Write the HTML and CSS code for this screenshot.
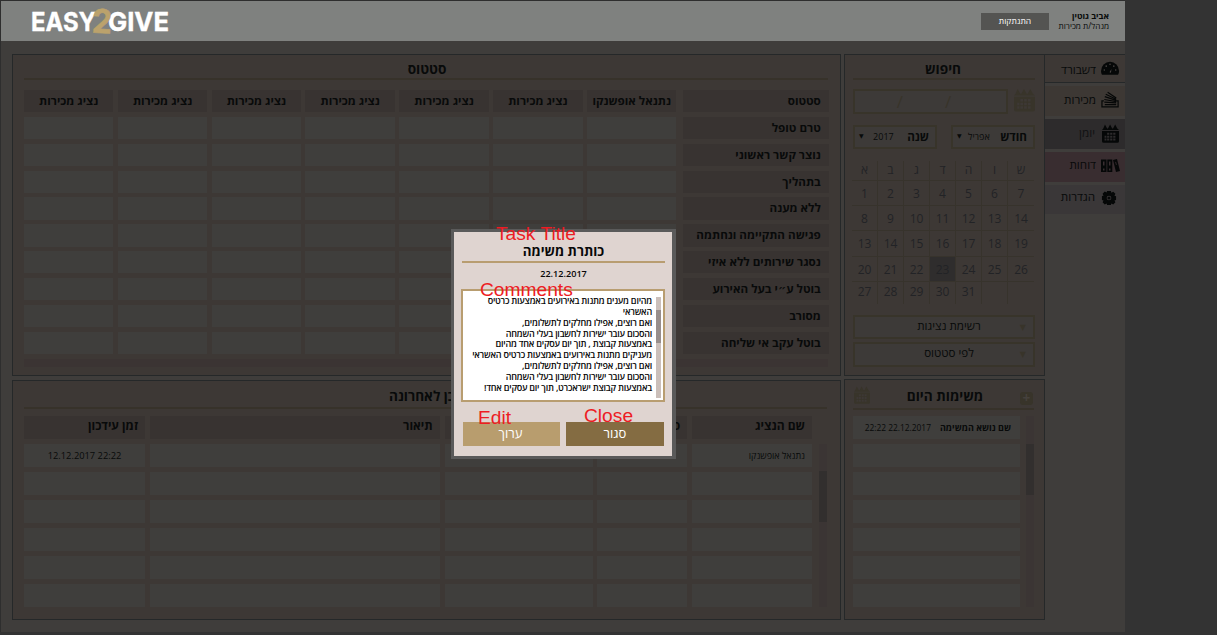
FILE: index.html
```html
<!DOCTYPE html>
<html lang="he"><head><meta charset="utf-8"><title>Easy2Give</title><link rel="stylesheet" href="styles.css"></head>
<body>
<svg class="defs" width="0" height="0"><defs>
<symbol id="cal" viewBox="0 0 20 22"><path fill="currentColor" fill-rule="evenodd" d="M0 6.800L1.500 5l2-4.500L6 5h1l2.500-4.500L12 5h1l2.500-4.500L18 5l2 1.800zM0 8h20v12q0 2-2 2H2q-2 0-2-2zM6 10v2.500h2.600V10zm3.600 0v2.500h2.600V10zm3.600 0v2.500h2.600V10zM3 13.500V16h2.200v-2.500zm3 0V16h2.600v-2.500zm3.600 0V16h2.600v-2.500zm3.600 0V16h2.600v-2.500zM3 17v2.300h2.200V17zm3 0v2.300h2.600V17zm3.600 0v2.300h2.600V17zm3.600 0v2.300h2.600V17z"/></symbol>
</defs></svg>
<div class="app" dir="rtl">
<header class="top">
 <div class="user"><b>אביב גוטין</b><span>מנהל/ת מכירות</span></div>
 <button class="logout">התנתקות</button>
 <svg class="logo" width="140" height="30" viewBox="0 0 140 30" direction="ltr"><g font-family="Inter" font-weight="700" font-size="26"><text x="-1" y="25" fill="#fff" stroke="#fff" stroke-width=".4" textLength="65" lengthAdjust="spacingAndGlyphs">EASY</text><text x="76" y="25" fill="#fff" stroke="#fff" stroke-width=".4" textLength="61" lengthAdjust="spacingAndGlyphs">GIVE</text><text x="60" y="27" font-size="33" textLength="20" lengthAdjust="spacingAndGlyphs" fill="#bba26c" stroke="#bba26c" stroke-width=".6" transform="rotate(3 70 18)">2</text></g></svg>
</header>
<main class="main">
 <nav class="nav">
  <a class="n0"><svg width="20" height="15" viewBox="0 0 20 15"><path d="M1 14Q0 12 0 10a9.500 9.500 0 0 1 19 0q0 2-1 4z"/><g fill="#4a4644"><circle cx="3.500" cy="9" r=".8"/><circle cx="5.500" cy="5" r=".8"/><circle cx="9.500" cy="3" r=".8"/><circle cx="13.500" cy="5" r=".8"/><circle cx="15.500" cy="9" r=".8"/><path d="M9 11.500l2-3.500-.5 4z"/></g></svg>דשבורד</a>
  <a class="n1"><svg class="stack" width="20" height="17" viewBox="0 0 20 17"><path d="M3 10H1v6.200h17V10h-2M4 13.800h12M3.500 11.300l12.500.7M3.500 8.500l12.500 2.300M4 5.500l12 4M5 3l11 5.200M7 .8l9 6.200"/></svg>מכירות</a>
  <a class="n2"><svg width="17" height="19"><use href="#cal"/></svg>יומן</a>
  <a class="n3"><svg width="19" height="14" viewBox="0 0 19 14"><path fill-rule="evenodd" d="M0 .5h5.500V13H0zM6.300.5h5V13h-5zM12 1l4-1 3 12-4 1zM2 2.500v4h1.500v-4zm6 0v4h1.500v-4zm-6 7v2h1.500v-2zm6 0v2h1.500v-2zM14.200 3l.8 3 .8-.2-.8-3z"/></svg>דוחות</a>
  <a class="n4"><svg width="16" height="16" viewBox="-8.500 -8.500 17 17"><path fill-rule="evenodd" d="M-2-7.500h4l.5 1.800 2-1 2.300 2.300-1 2 1.700.5v4l-1.700.5 1 2-2.300 2.300-2-1L2 7.500h-4l-.5-1.600-2 1-2.300-2.300 1-2L-7.500 2v-4l1.700-.5-1-2 2.300-2.300 2 1zM0-2.500a2.500 2.500 0 1 0 0 5 2.500 2.500 0 0 0 0-5"/><circle r="1.700"/></svg>הגדרות</a>
 </nav>
 <aside class="side">
  <section class="panel search">
   <h2>חיפוש</h2>
   <div class="date"><svg width="21" height="24"><use href="#cal"/></svg><div class="box datebox"><i>/</i><i>/</i></div></div>
   <div class="selects"><div class="box sel"><b>חודש</b><span>אפריל</span><em>▼</em></div><div class="box sel"><b>שנה</b><span>2017</span><em>▼</em></div></div>
   <div class="calendar" id="calendar"></div>
   <div class="box drop d1">רשימת נציגות<em>▼</em></div>
   <div class="box drop d2">לפי סטטוס<em>▼</em></div>
  </section>
  <section class="panel tasks">
   <h2><span class="plus">+</span>משימות היום<svg width="16" height="18"><use href="#cal"/></svg></h2>
   <div class="scrollrow"><div class="bar b1"><i></i></div><div class="list"><div><b>שם נושא המשימה</b><span dir="ltr">22:22 22.12.2017</span></div><div></div><div></div><div></div><div></div><div></div><div></div></div></div>
  </section>
 </aside>
 <div class="content">
  <section class="panel status"><h2>סטטוס</h2><div class="grid" id="grid"></div><div class="hbar"></div></section>
  <section class="panel updates"><h2><span>מי עודכן לאחרונה</span></h2>
   <div class="scrollrow"><div class="bar b2"><i></i></div><div class="table" id="table"></div></div></section>
 </div>
</main>
</div>
<div class="modal" dir="rtl">
 <h3>כותרת משימה</h3><div class="mdate">22.12.2017</div>
 <div class="comment"><div class="mbar"><i></i></div><p>מהיום מענים מתנות באירועים באמצעות כרטיס<br>האשראי<br>ואם רוצים, אפילו מחלקים לתשלומים,<br>והסכום עובר ישירות לחשבון בעלי השמחה<br>באמצעות קבוצת , תוך יום עסקים אחד מהיום<br>מעניקים מתנות באירועים באמצעות כרטיס האשראי<br>ואם רוצים, אפילו מחלקים לתשלומים,<br>והסכום עובר ישירות לחשבון בעלי השמחה<br>באמצעות קבוצת ישראכרט, תוך יום עסקים אחד!</p></div>
 <div class="btns"><button class="close">סגור</button><button class="edit">ערוך</button></div>
 <span class="note t1">Task Title</span><span class="note t2">Comments</span><span class="note t3">Edit</span><span class="note t4">Close</span>
</div>
<script src="app.js"></script>
</body></html>
```
FILE: styles.css
```css
*{box-sizing:border-box}
body{margin:0;width:1217px;height:635px;overflow:hidden;background:#333;font-family:"Open Sans","Noto Sans","DejaVu Sans",sans-serif;color:#080a0a;position:relative}
.defs{position:absolute}
h2,h3,p{margin:0}
button{border:0;padding:0;font:inherit;color:#fff}
i,em{font-style:normal}
svg{display:block;fill:#050707;flex:none}
.app{width:1125px;height:632px;background:#3f3d3b;border:solid #2e2e2e;border-width:1px 0 0 1px}
.top{height:40px;background:#7f817f;display:flex;align-items:center;padding:0 16px 0 0}
.user{width:60px;display:flex;flex-direction:column;font-size:8.500px;line-height:10px;white-space:nowrap}
.user span{font-size:8.200px}
.logout{background:#545452;width:68px;height:17px;font-size:8.500px;line-height:16px}
.logo{margin-right:auto;margin-left:31px;overflow:visible}
.main{display:flex;padding-top:13px}
.nav{width:80px;display:flex;flex-direction:column;gap:3px;border-top:1px solid #252829}
.nav a{height:30px;display:flex;align-items:center;gap:5px;padding:0 5px 4px 0;font-size:11.700px}
.nav svg{width:19px}
.nav .n0{height:28px;background:#3d3835;border-bottom:1px solid #252829;padding-bottom:0}
.stack path{fill:none;stroke:#050707;stroke-width:1.300}
.n1{background:#3d3834}.n2{background:#2d2b2c;color:#101112}.n3{background:#392d30}.n4{background:#3a3738}
.nav .n2{padding-right:6px;gap:7px;padding-bottom:5px}.nav .n2 svg{width:17px;margin-top:3px;color:#050707}
.nav .n3{padding-bottom:6px}.nav .n3 svg{margin-top:3px}
.nav .n4{height:29px;padding:0 8px 7px 0;gap:6px}.nav .n4 svg{width:16px;margin-top:4px}
.side{width:201px;display:flex;flex-direction:column;gap:3px}
.panel{background:#3d3835;border:1px solid #252829}
.search{height:322px;padding:0 9px 0 8px}
h2{font-size:13.600px;line-height:20px;text-align:center;border-bottom:2px solid #37322a;height:25px;padding-top:4px}
.search h2{padding-right:2px}
.date{display:flex;justify-content:space-between;margin-top:9px;height:25px}
.date svg,.tasks h2 svg{color:#38342a}
.date svg{margin-top:-1px}
.tasks h2 svg{margin-top:-3px}
.box{border:2px solid #38342a;background:#3d3a38}
.datebox{width:155px;display:flex;justify-content:center;gap:42px;font-size:17px;line-height:21px;color:#38342a;padding-right:13px}
.selects{display:flex;justify-content:space-between;margin-top:11px}
.sel{width:84px;height:24px;display:flex;align-items:center;font-size:9px;padding:0 6px 2px 4px;justify-content:space-between}
.sel b{font-size:11.700px}.sel em{font-size:6px}.sel span{margin-right:4px}
.calendar{direction:ltr;display:grid;grid-template-columns:repeat(7,26px);grid-template-rows:20px 25px 25px 26px 25px 22px;margin-top:12px;margin-right:1px;width:182px}
.calendar div{border-right:1px solid #37332c;border-bottom:1px solid #37332c;text-align:center;font-size:12px;line-height:18px;color:#222326;padding-top:4px}
.calendar .h{padding-top:0}
.calendar div:nth-child(7n){border-right:0}
.calendar div:nth-child(n+36){border-bottom:0;padding-top:1px}
.calendar .on{background:#2f2d2d}
.drop{height:24px;position:relative;text-align:center;font-size:11.600px;line-height:18px;padding-left:10px;margin-top:11px}
.d2{margin-top:3px;height:25px}
.drop em{position:absolute;right:7px;top:1px;font-size:8px;color:#38342a}
.tasks{height:241px;padding:0 10px 0 8px}
.tasks h2{display:flex;justify-content:space-between;align-items:center;height:30px;padding:4px 1px 0 1px;margin-bottom:6px}
.plus{width:13px;height:13px;background:#38342a;color:#45413d;border-radius:3px;line-height:12px;margin-top:4px}
.scrollrow{display:flex}
.bar{width:8px;background:#3b3534}.bar i{display:block;background:#322f2e;height:51px}
.b1{height:191px;padding-top:28px;margin-left:6px}
.list{width:167px;display:grid;grid-auto-rows:23px;gap:5px}
.list div{background:#3f3e3c;display:flex;align-items:center;font-size:9px;padding-right:9px;gap:9px;white-space:nowrap}
.list span{font-size:8.400px}
.content{width:829px;margin-right:3px;margin-left:11px;display:flex;flex-direction:column;gap:4px}
.status{height:322px;padding:0 12px 0 11px}
.status h2{padding-left:2px}
.grid{direction:ltr;display:grid;grid-template-columns:repeat(7,89.400px) 146px;column-gap:4.450px;grid-auto-rows:22.300px;row-gap:4.550px;margin:10px 0 0}
.grid div{background:#3f3e3c;font-size:11.650px;font-weight:700;line-height:22px;text-align:center;white-space:nowrap}
.grid .h{background:#383331}.grid .l{direction:rtl;text-align:right;padding-right:8px;margin-left:2px;margin-right:-2px}
.hbar{height:8px;background:#3b3433;margin-top:5px;width:804px}
.updates{height:240px;padding:0 13px 0 11px}
.updates h2{height:28px;padding-top:5px;margin-bottom:7px}
.updates h2 span{position:relative;left:15px}
.b2{height:163px;margin-top:28px;padding-top:27px;margin-left:7px}
.table{direction:ltr;display:grid;grid-template-columns:121px 290px 148px 90px 120px;column-gap:4.750px;grid-auto-rows:23px;row-gap:5px;width:788px}
.table div{background:#3f3e3c;direction:rtl;padding-right:7px;font-size:9px;line-height:23px;white-space:nowrap}
.table .h{background:#383331;font-size:12px;font-weight:700;line-height:20px}
.table .c{direction:ltr;text-align:center;padding:0;font-size:9.300px}
.modal{position:absolute;left:451px;top:229px;width:225px;height:230px;background:#dfd4d0;border:3px solid #5a5a5a;border-right-width:4px;color:#080808;padding:0 7px 0 8px}
.modal h3{font-size:13.300px;line-height:20px;padding-top:9px;height:31px;border-bottom:2px solid #b89d70;text-align:center}
.mdate{font-size:9.100px;font-weight:600;text-align:center;line-height:14px;margin-top:4px}
.comment{height:113px;margin:8px 0 0 -1px;border:2px solid #b89d70;background:#fff;display:flex;padding:4px 2px 0 0}
.comment p{font-size:9px;font-weight:600;letter-spacing:-.240px;line-height:10.850px;white-space:nowrap;margin:1px 4px 0 0}
.mbar{width:5px;height:101px;background:#cbbfba;margin-top:2px;padding-top:13px;flex:none}.mbar i{display:block;height:33px;background:#988e8b}
.btns{display:flex;justify-content:space-between;margin:20px 1px 0}
.btns button{width:98px;height:24px;font-size:13px;line-height:22px;padding-bottom:2px}
.btns .edit{width:97px;padding-right:2px}
.close{background:#846c42}.edit{background:#b89d6e}
.note{position:absolute;direction:ltr;color:#ed1c24;font:19.200px/22px "Liberation Sans",Arial,sans-serif;white-space:nowrap}
.t1{left:42px;top:-9px}.t2{left:26px;top:47px}.t3{left:24px;top:175px}.t4{left:130px;top:173px}
```
FILE: app.js
```js
function add(parent, text, cls) {
  const d = document.createElement('div');
  d.textContent = text;
  if (cls) d.className = cls;
  parent.append(d);
}
const calendar = document.getElementById('calendar');
['א','ב','ג','ד','ה','ו','ש'].forEach(t => add(calendar, t, 'h'));
[1,2,3,4,5,6,7,8,9,10,11,12,13,14,13,14,15,16,17,18,19,20,21,22,23,24,25,26,27,28,29,30,31,'','']
  .forEach(t => add(calendar, t, t === 23 ? 'on' : ''));
const grid = document.getElementById('grid');
['סטטוס','טרם טופל','נוצר קשר ראשוני','בתהליך','ללא מענה','פגישה התקיימה ונחתמה','נסגר שירותים ללא איזי','בוטל ע״י בעל האירוע','מסורב','בוטל עקב אי שליחה'].forEach((label, r) => {
  for (let c = 0; c < 7; c++) add(grid, r ? '' : c === 6 ? 'נתנאל אופשנקו' : 'נציג מכירות', r ? '' : 'h');
  add(grid, label, 'h l');
});
const table = document.getElementById('table');
['זמן עידכון','תיאור','שם הלקוח','סטטוס','שם הנציג'].forEach(t => add(table, t, 'h'));
add(table, '12.12.2017 22:22', 'c');
['','','','נתנאל אופשנקו'].forEach(t => add(table, t));
for (let i = 0; i < 25; i++) add(table, '');
```
